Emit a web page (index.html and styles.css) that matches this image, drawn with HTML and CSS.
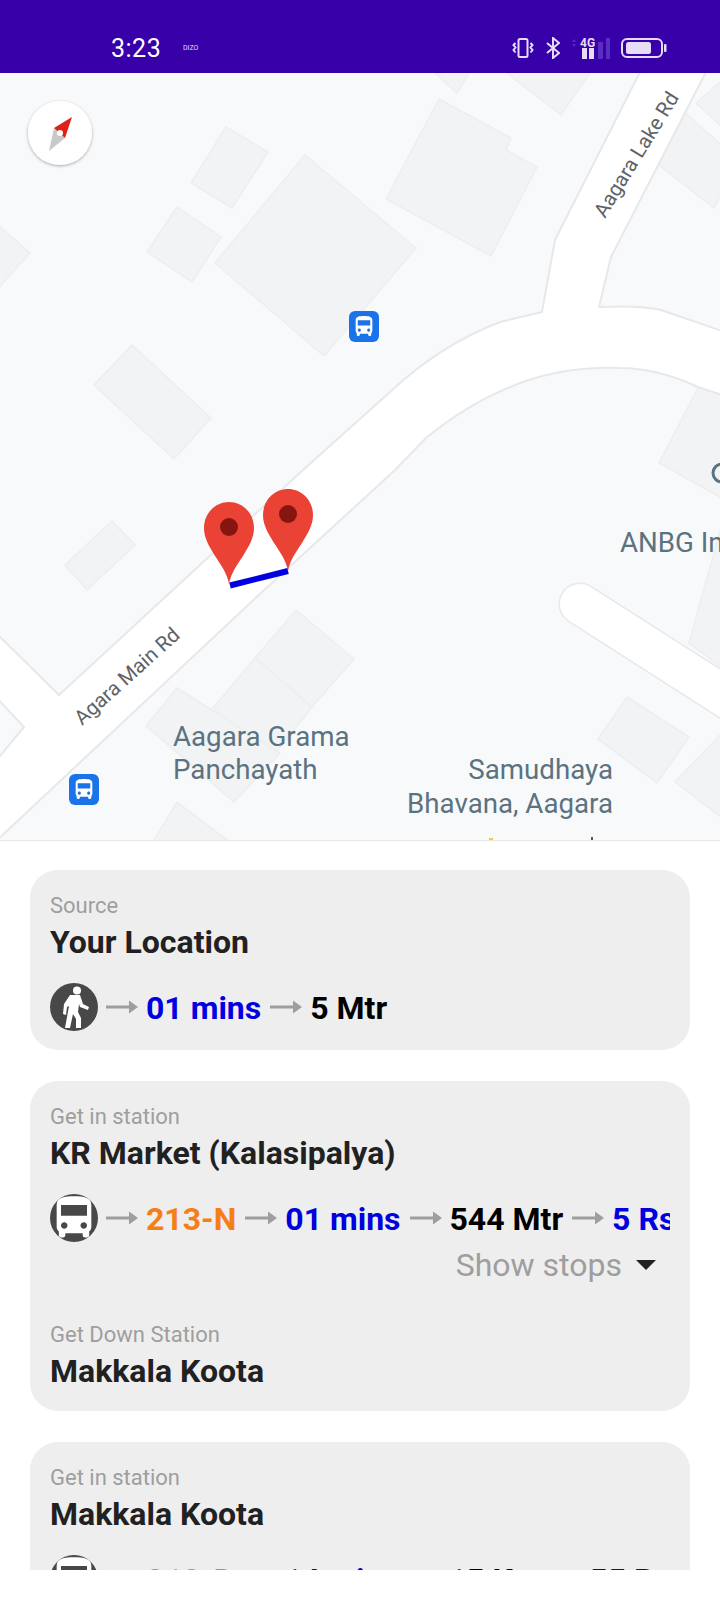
FILE: index.html
```html
<!DOCTYPE html>
<html lang="en">
<head>
    <meta charset="UTF-8">
    <meta name="viewport" content="width=device-width, initial-scale=1.0">
    <title>Route</title>
    <link rel="stylesheet" href="styles.css">
</head>
<body>

<svg class="defs" width="0" height="0">
    <defs>
        <symbol id="bus" viewBox="0 0 24 24">
            <path d="M4 16c0 .88.39 1.67 1 2.22V20c0 .55.45 1 1 1h1c.55 0 1-.45 1-1v-1h8v1c0 .55.45 1 1 1h1c.55 0 1-.45 1-1v-1.78c.61-.55 1-1.34 1-2.22V6c0-3.5-3.58-4-8-4s-8 .5-8 4v10zm3.5 1c-.83 0-1.5-.67-1.5-1.5S6.67 14 7.5 14s1.5.67 1.5 1.5S8.33 17 7.5 17zm9 0c-.83 0-1.5-.67-1.5-1.5s.67-1.5 1.5-1.5 1.5.67 1.5 1.5-.67 1.5-1.5 1.5zm1.5-6H6V6h12v5z"/>
        </symbol>
        <symbol id="arrow" viewBox="0 0 32 16">
            <path d="M0 6.500h23V1.500l9 6.500-9 6.500V9.500H0z"/>
        </symbol>
        <symbol id="pin" viewBox="0 0 50 82">
            <path fill="#ea4335" d="M25 0C11 0 0 11.500 0 26c0 10 5 18 11 28 6 9 12 17 14 28 2-11 8-19 14-28 6-10 11-18 11-28C50 11.500 39 0 25 0z"/>
            <circle fill="#86150f" cx="25" cy="25" r="9"/>
        </symbol>
        <filter id="soft" x="-20%" y="-20%" width="140%" height="140%">
            <feDropShadow dx="0" dy="1" stdDeviation="1.500" flood-color="#000" flood-opacity="0.35"/>
        </filter>
    </defs>
</svg>

<div class="status-bar">
    <span class="time">3:23</span>
    <span class="carrier">DIZO</span>
    <div class="status-icons">
        <svg class="icon-vibrate" width="22" height="20" viewBox="0 0 22 20">
            <rect x="6.500" y="1" width="9" height="18" rx="1.500"/>
            <path d="M3.500 5l-2 2 2 2.500-2 2.500 2 2.500M18.500 5l2 2-2 2.500 2 2.500-2 2.500"/>
        </svg>
        <svg class="icon-bt" width="14" height="22" viewBox="0 0 14 22">
            <path d="M1 6l12 10-6 5V1l6 5L1 16"/>
        </svg>
        <svg class="icon-signal" width="38" height="22" viewBox="0 0 38 22">
            <path class="dim" d="M0 5l2-3 2 3zM0 7l2 3 2-3z"/>
            <text class="net" x="8" y="10">4G</text>
            <rect x="10" y="11" width="5" height="11"/>
            <rect x="17" y="11" width="5" height="11"/>
            <rect class="dim" x="26" y="5" width="5" height="17"/>
            <rect class="dim" x="34" y="1" width="4" height="21"/>
        </svg>
        <svg class="icon-battery" width="46" height="20" viewBox="0 0 46 20">
            <rect class="shell" x="1" y="1" width="40" height="18" rx="5"/>
            <rect class="charge" x="5" y="4" width="25" height="12" rx="2.500"/>
            <rect class="charge" x="43" y="6" width="2.500" height="8" rx="1"/>
        </svg>
    </div>
</div>

<div class="map">
    <svg class="map-canvas" width="720" height="767" viewBox="0 73 720 767">
        <g class="buildings">
            <path d="M305 155L416 248 324 356 215 263z"/>
            <path d="M439 99L511 138 506 150 537 167 491 256 386 199z"/>
            <path d="M226 127L268 152 232 208 191 183z"/>
            <path d="M177 207L221 237 192 282 147 252z"/>
            <path d="M-5 222L30 253-5 292z"/>
            <path d="M132 345L211 418 174 459 94 385z"/>
            <path d="M432 70L457 93 471 70z"/>
            <path d="M503 70L561 115 592 70z"/>
            <path d="M659 165L684 112 725 148V186L714 208z"/>
            <path d="M696 103L725 78V130z"/>
            <path d="M702 380L725 395V500L659 463z"/>
            <path d="M112 521L135 545 87 590 65 565z"/>
            <path d="M296 610L354 659 312 707 255 658z"/>
            <path d="M255 658L312 707 270 760 213 708z"/>
            <path d="M177 688L280 753 234 802 146 726z"/>
            <path d="M627 697L689 737 657 783 598 739z"/>
            <path d="M725 730L675 782 725 820z"/>
            <path d="M177 802L234 845H151z"/>
            <path d="M725 513L689 643 725 670z"/>
        </g>
        <path class="road" d="M-5 632L59 695 303 470 390 392Q440 345 500 322L542 312 555 240 643 66H709L611 257 599 307 Q640 305 661 310L725 332V396L698 387Q657 368 620 368 569 366 523 382 473 400 427 437L395 470 262 592-5 842z"/>
        <path class="block" d="M-5 696L24 727-5 762z"/>
        <path class="ramp-edge" d="M580 604L735 703"/>
        <path class="ramp-fill" d="M580 604L735 703"/>

        <circle class="poi-ring" cx="722" cy="473" r="9"/>

        <text class="road-label" transform="translate(82 726) rotate(-42)">Agara Main Rd</text>
        <text class="road-label" transform="translate(605 219) rotate(-58.500)">Aagara Lake Rd</text>

        <text class="place" x="173" y="746">Aagara Grama</text>
        <text class="place" x="173" y="779">Panchayath</text>
        <text class="place end" x="613" y="779">Samudhaya</text>
        <text class="place end" x="613" y="813">Bhavana, Aagara</text>
        <text class="place" x="620" y="552">ANBG In</text>

        <rect class="stop" x="349" y="311" width="30" height="31" rx="6"/>
        <use class="stop-bus" href="#bus" x="351" y="314" width="26" height="25"/>
        <rect class="stop" x="69" y="774" width="30" height="31" rx="6"/>
        <use class="stop-bus" href="#bus" x="71" y="777" width="26" height="25"/>

        <use href="#pin" x="204" y="502" width="50" height="82"/>
        <use href="#pin" x="263" y="489" width="50" height="82"/>
        <path class="walk-line" d="M230 585.500L288 571"/>

        <path fill="#f5c842" d="M489 838h4v2h-4z"/>
        <path fill="#555" d="M591 837h2v3h-2z"/>

        <g class="compass">
            <circle class="compass-face" cx="60" cy="133" r="32"/>
            <path fill="#c9c9c9" d="M49 151L54 128 65 138z"/>
            <path fill="#e0201b" d="M72 117L54 128 65 138z"/>
            <circle fill="#fff" cx="60" cy="133" r="3"/>
        </g>
    </svg>
</div>

<div class="route-list">

    <div class="card">
        <div class="label">Source</div>
        <div class="name">Your Location</div>
        <div class="leg">
            <span class="mode">
                <svg width="48" height="48" viewBox="0 0 48 48">
                    <circle cx="27" cy="7.500" r="4"/>
                    <path d="M20 12h10l3 9 6 3-1 3-8-3-1-3-1 8 3 6v10h-5v-9l-3-5-3 14h-5l4-22-2 1-1 8-3-1 1-10z"/>
                </svg>
            </span>
            <svg class="arrow"><use href="#arrow"/></svg>
            <span class="val time-val">01 mins</span>
            <svg class="arrow"><use href="#arrow"/></svg>
            <span class="val dist">5 Mtr</span>
        </div>
    </div>

    <div class="card card-long">
        <div class="label">Get in station</div>
        <div class="name">KR Market (Kalasipalya)</div>
        <div class="leg">
            <span class="mode"><svg class="bus" viewBox="0 0 24 24"><use href="#bus"/></svg></span>
            <svg class="arrow"><use href="#arrow"/></svg>
            <span class="val line">213-N</span>
            <svg class="arrow"><use href="#arrow"/></svg>
            <span class="val time-val">01 mins</span>
            <svg class="arrow"><use href="#arrow"/></svg>
            <span class="val dist">544 Mtr</span>
            <svg class="arrow"><use href="#arrow"/></svg>
            <span class="val time-val">5 Rs</span>
        </div>
        <div class="stops">
            <span>Show stops</span>
            <i class="caret"></i>
        </div>
        <div class="label down">Get Down Station</div>
        <div class="name">Makkala Koota</div>
    </div>

    <div class="card card-long">
        <div class="label">Get in station</div>
        <div class="name">Makkala Koota</div>
        <div class="leg">
            <span class="mode"><svg class="bus" viewBox="0 0 24 24"><use href="#bus"/></svg></span>
            <svg class="arrow"><use href="#arrow"/></svg>
            <span class="val line">213-D</span>
            <svg class="arrow"><use href="#arrow"/></svg>
            <span class="val time-val">14 mins</span>
            <svg class="arrow"><use href="#arrow"/></svg>
            <span class="val dist">15 Km</span>
            <svg class="arrow"><use href="#arrow"/></svg>
            <span class="val time-val">55 Rs</span>
        </div>
    </div>

</div>

</body>
</html>
```

FILE: styles.css
```css
html, body {
    margin: 0;
    padding: 0;
}
body {
    width: 720px;
    height: 1600px;
    overflow: hidden;
    background: #fff;
    font-family: Roboto, sans-serif;
}
.defs {
    display: block;
    height: 0;
}

/* barra de estado */
.status-bar {
    height: 73px;
    box-sizing: border-box;
    padding: 37px 53px 0 111px;
    background: #3700a9;
    color: #fff;
    display: flex;
    align-items: flex-start;
}
.time {
    font-size: 25px;
    line-height: 24px;
    letter-spacing: 0.5px;
    width: 72px;
}
.carrier {
    font-size: 7px;
    line-height: 22px;
    color: #e6dcf8;
}
.status-icons {
    margin-left: auto;
    display: flex;
    align-items: center;
    gap: 12px;
    height: 22px;
}
.status-icons svg {
    display: block;
}
.icon-vibrate rect, .icon-vibrate path, .icon-bt path {
    fill: none;
    stroke: #e6dcf8;
    stroke-width: 2;
}
.icon-signal {
    fill: #e6dcf8;
    margin-right: -1px;
}
.icon-signal .dim {
    fill: #5a2cc0;
}
.net {
    font-size: 12px;
    font-weight: 700;
}
.shell {
    fill: none;
    stroke: #e6dcf8;
    stroke-width: 2;
}
.charge {
    fill: #e6dcf8;
}

/* mapa */
.map {
    height: 767px;
    background: #f8f9fa;
    box-shadow: 0 1px 1px #e8e8e8;
}
.map-canvas {
    display: block;
}
.buildings path {
    fill: #f1f3f4;
    stroke: #eceef0;
    stroke-width: 1.5;
}
.road {
    fill: #fff;
    stroke: #e6e8eb;
    stroke-width: 2;
    stroke-linejoin: round;
}
.block {
    fill: #f8f9fa;
    stroke: #e6e8eb;
    stroke-width: 2;
}
.ramp-edge {
    fill: none;
    stroke: #e6e8eb;
    stroke-width: 43;
    stroke-linecap: round;
}
.ramp-fill {
    fill: none;
    stroke: #fff;
    stroke-width: 40;
    stroke-linecap: round;
}
.poi-ring {
    fill: none;
    stroke: #5b7280;
    stroke-width: 3;
}
.road-label {
    font-size: 20.500px;
    fill: #5f6368;
}
.place {
    font-size: 27.700px;
    fill: #5b7280;
}
.end {
    text-anchor: end;
}
.stop {
    fill: #1a73e8;
}
.stop-bus {
    fill: #fff;
}
.walk-line {
    fill: none;
    stroke: #0000e0;
    stroke-width: 6;
}
.compass-face {
    fill: #fff;
    filter: url(#soft);
}

/* lista de tramos */
.route-list {
    height: 730px;
    box-sizing: border-box;
    overflow: hidden;
    padding: 30px 30px 0;
    display: flex;
    flex-direction: column;
    gap: 31px;
}
.card {
    flex-shrink: 0;
    box-sizing: border-box;
    height: 180px;
    padding: 24px 20px 0;
    border-radius: 28px;
    background: #eee;
}
.card-long {
    height: 330px;
}
.label {
    font-size: 22px;
    line-height: 24px;
    color: #9e9e9e;
}
.label.down {
    margin-top: 39px;
}
.name {
    margin-top: 6px;
    font-size: 32px;
    line-height: 36px;
    font-weight: 700;
    color: #212121;
}
.leg {
    margin-top: 23px;
    display: flex;
    align-items: center;
    overflow: hidden;
    height: 48px;
    font-size: 32px;
    font-weight: 700;
    white-space: nowrap;
}
.leg > * {
    flex-shrink: 0;
}
.val {
    margin-top: 2px;
}
.mode {
    width: 48px;
    height: 48px;
    border-radius: 50%;
    background: #484848;
    fill: #fff;
    display: flex;
    align-items: center;
    justify-content: center;
    overflow: hidden;
}
.bus {
    width: 52px;
    height: 52px;
    flex-shrink: 0;
}
.arrow {
    width: 32px;
    height: 16px;
    margin: 0 8px;
    fill: #9e9e9e;
}
.val + .arrow {
    margin-left: 9px;
}
.line {
    color: #f57f17;
}
.time-val {
    color: #0000e0;
}
.dist {
    color: #000;
}
.stops {
    display: flex;
    justify-content: flex-end;
    align-items: center;
    gap: 14px;
    padding-right: 14px;
    margin-top: 4px;
    font-size: 32px;
    line-height: 38px;
    color: #9e9e9e;
}
.caret {
    width: 0;
    height: 0;
    border-left: 10px solid transparent;
    border-right: 10px solid transparent;
    border-top: 10px solid #212121;
}
```
